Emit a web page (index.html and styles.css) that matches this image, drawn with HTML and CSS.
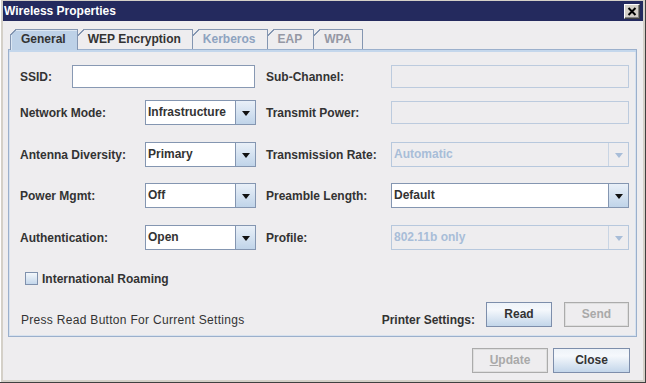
FILE: index.html
```html
<!DOCTYPE html>
<html>
<head>
<meta charset="utf-8">
<link rel="stylesheet" href="styles.css">
</head>
<body>
<div class="window">
  <div class="titlebar">
    <span class="title">Wireless Properties</span>
    <span class="close-btn"><svg width="10" height="9" viewBox="0 0 10 9"><path d="M1.5 1 L8.5 8 M8.5 1 L1.5 8" stroke="#000" stroke-width="2" fill="none"/></svg></span>
  </div>
  <div class="content">
    <div class="tabs">
      <div class="tab tab-first selected">General</div>
      <div class="tab">WEP Encryption</div>
      <div class="tab tab-disabled">Kerberos</div>
      <div class="tab tab-dim">EAP</div>
      <div class="tab tab-dim">WPA</div>
    </div>
    <div class="pane">
      <div class="form">
        <div class="row row-ssid">
          <div class="pair pair-left">
            <span class="lbl lbl-short">SSID:</span>
            <span class="textfield textfield-ssid"></span>
          </div>
          <div class="pair pair-right">
            <span class="lbl">Sub-Channel:</span>
            <span class="textfield disabled"></span>
          </div>
        </div>
        <div class="row">
          <div class="pair pair-left">
            <span class="lbl">Network Mode:</span>
            <span class="combo"><span class="value">Infrastructure</span><span class="arrow"><i class="tri"></i></span></span>
          </div>
          <div class="pair pair-right">
            <span class="lbl">Transmit Power:</span>
            <span class="textfield disabled"></span>
          </div>
        </div>
        <div class="row">
          <div class="pair pair-left">
            <span class="lbl">Antenna Diversity:</span>
            <span class="combo"><span class="value">Primary</span><span class="arrow"><i class="tri"></i></span></span>
          </div>
          <div class="pair pair-right">
            <span class="lbl">Transmission Rate:</span>
            <span class="combo disabled"><span class="value">Automatic</span><span class="arrow"><i class="tri"></i></span></span>
          </div>
        </div>
        <div class="row">
          <div class="pair pair-left">
            <span class="lbl">Power Mgmt:</span>
            <span class="combo"><span class="value">Off</span><span class="arrow"><i class="tri"></i></span></span>
          </div>
          <div class="pair pair-right">
            <span class="lbl">Preamble Length:</span>
            <span class="combo"><span class="value">Default</span><span class="arrow"><i class="tri"></i></span></span>
          </div>
        </div>
        <div class="row">
          <div class="pair pair-left">
            <span class="lbl">Authentication:</span>
            <span class="combo"><span class="value">Open</span><span class="arrow"><i class="tri"></i></span></span>
          </div>
          <div class="pair pair-right">
            <span class="lbl">Profile:</span>
            <span class="combo disabled"><span class="value">802.11b only</span><span class="arrow"><i class="tri"></i></span></span>
          </div>
        </div>
      </div>
      <div class="check-row">
        <span class="checkbox"></span>
        <span class="check-label">International Roaming</span>
      </div>
      <div class="bottom-row">
        <span class="hint">Press Read Button For Current Settings</span>
        <span class="spacer"></span>
        <span class="lbl-printer">Printer Settings:</span>
        <span class="btn btn-read">Read</span>
        <span class="btn btn-send disabled">Send</span>
      </div>
    </div>
    <div class="footer">
      <span class="btn btn-update disabled"><u>U</u>pdate</span>
      <span class="btn btn-close">Close</span>
    </div>
  </div>
</div>
</body>
</html>
```
FILE: styles.css
```css
html, body {
  margin: 0;
  padding: 0;
  background: #d4d0c8;
}
body {
  font-family: "Liberation Sans", Arial, sans-serif;
  font-size: 12px;
  color: #333333;
}
.window {
  width: 646px;
  height: 383px;
  box-sizing: border-box;
  padding: 1px 2px 2px 3px;
  background: #d4d0c8;
  border-right: 1px solid #404040;
  border-bottom: 1px solid #404040;
  box-shadow: inset 1px 0 0 #ffffff;
  display: flex;
  flex-direction: column;
}
.titlebar {
  height: 20px;
  flex: none;
  background: #242a5e;
  display: flex;
  align-items: flex-start;
  justify-content: space-between;
}
.title {
  color: #ffffff;
  font-weight: bold;
  font-size: 12px;
  line-height: 20px;
  padding-left: 1px;
}
.close-btn {
  margin-top: 3px;
  margin-right: 3px;
  width: 16px;
  height: 15px;
  box-sizing: border-box;
  background: #d4d0c8;
  border-top: 1px solid #ffffff;
  border-left: 1px solid #ffffff;
  border-right: 1px solid #404040;
  border-bottom: 1px solid #404040;
  box-shadow: inset -1px -1px 0 #808080;
  display: flex;
  align-items: center;
  justify-content: center;
}
.close-btn svg { display: block; margin-left: -1px; margin-top: -1px; }
.content {
  flex: 1;
  background: #eeedef;
  padding-top: 8px;
  display: flex;
  flex-direction: column;
}
.tabs {
  display: flex;
  margin-left: 7px;
  height: 20px;
  position: relative;
  z-index: 1;
}
.tab {
  position: relative;
  box-sizing: border-box;
  height: 20px;
  padding: 0 11px 0 10px;
  border-top: 1px solid #8496b1;
  border-right: 1px solid #8496b1;
  font-weight: bold;
  line-height: 19px;
  color: #333333;
  background: #eeedef;
}
.tab::before {
  content: "";
  position: absolute;
  top: -1px;
  left: 0;
  width: 7px;
  height: 7px;
  background: linear-gradient(to bottom right, #eeedef 0, #eeedef calc(50% - 0.8px), #8496b1 calc(50% - 0.8px), #8496b1 calc(50% + 0.6px), transparent calc(50% + 0.6px));
}
.tab-first {
  border-left: 1px solid #8496b1;
}
.tab-first::before {
  left: -1px;
}
.tab.selected {
  background: #bdd1e7;
  height: 21px;
  box-shadow: inset 1px 1px 0 #dce7f3;
}
.tab-disabled { color: #8ea3c0; }
.tab-dim { color: #9598a4; }
.pane {
  margin-left: 5px;
  width: 629px;
  height: 288px;
  box-sizing: border-box;
  border: 1px solid #9bb0cc;
  box-shadow: inset 0 2px 0 #c4d7ec, inset 1px 0 0 #d7e2ef, inset -1px 0 0 #d7e2ef, inset 0 -1px 0 #d7e2ef;
  padding: 15px 7px 0 11px;
  display: flex;
  flex-direction: column;
}
.form {
  display: flex;
  flex-direction: column;
}
.row {
  display: flex;
  gap: 10px;
  height: 25px;
}
.row-ssid { height: 23px; }
.row:nth-child(2) { margin-top: 12px; }
.row:nth-child(3) { margin-top: 17px; }
.row:nth-child(4) { margin-top: 16px; }
.row:nth-child(5) { margin-top: 17px; }
.pair {
  display: flex;
  align-items: center;
  height: 100%;
}
.pair-left { width: 236px; }
.pair-right { width: 363px; }
.lbl {
  width: 125px;
  flex: none;
  font-weight: bold;
  white-space: nowrap;
}
.lbl-short { width: 52px; }
.textfield {
  flex: 1;
  height: 23px;
  box-sizing: border-box;
  background: #ffffff;
  border: 1px solid #8899b3;
}
.textfield-ssid { margin-right: 1px; }
.textfield.disabled {
  background: transparent;
  border-color: #bccbde;
}
.combo {
  flex: 1;
  height: 25px;
  box-sizing: border-box;
  display: flex;
  background: #ffffff;
  border: 1px solid #8496b1;
}
.combo .value {
  flex: 1;
  padding-left: 2px;
  font-weight: bold;
  line-height: 23px;
  color: #333333;
  white-space: nowrap;
}
.combo .arrow {
  width: 19px;
  flex: none;
  border-left: 1px solid #8496b1;
  background: linear-gradient(#e9f0f8, #c0d4e9);
  display: flex;
  align-items: center;
  justify-content: center;
}
.tri {
  display: block;
  width: 0;
  height: 0;
  border-left: 4px solid transparent;
  border-right: 4px solid transparent;
  border-top: 5px solid #111111;
  margin-top: 1px;
}
.combo.disabled {
  background: transparent;
  border-color: #b7c8dd;
}
.combo.disabled .value { color: #a8bdd8; }
.combo.disabled .arrow {
  background: transparent;
  border-left-color: #c9d5e4;
}
.combo.disabled .tri { border-top-color: #a8bdd8; }
.check-row {
  display: flex;
  align-items: center;
  height: 13px;
  margin-top: 22px;
  padding-left: 5px;
}
.checkbox {
  width: 13px;
  height: 13px;
  box-sizing: border-box;
  border: 1px solid #7f91ad;
  background: linear-gradient(#f3f7fb, #c4d7eb);
}
.check-label {
  margin-left: 4px;
  font-weight: bold;
  line-height: 14px;
}
.bottom-row {
  display: flex;
  align-items: flex-end;
  height: 25px;
  margin-top: 17px;
}
.hint {
  margin-left: 1px;
  line-height: 14px;
  letter-spacing: 0.3px;
}
.spacer { flex: 1; }
.lbl-printer {
  font-weight: bold;
  line-height: 14px;
  margin-right: 11px;
}
.btn {
  height: 25px;
  box-sizing: border-box;
  border: 1px solid #7d8eab;
  background: linear-gradient(#eef3f9 0%, #f5f8fc 30%, #c3d6ea 100%);
  font-weight: bold;
  line-height: 23px;
  text-align: center;
  color: #333333;
}
.btn u { text-decoration: underline; }
.btn.disabled {
  background: transparent;
  border-color: #ababab;
  box-shadow: inset 0 0 0 1px #dedede;
  color: #a9a9a9;
}
.btn-read { width: 66px; }
.btn-send { width: 65px; margin-left: 12px; }
.footer {
  display: flex;
  justify-content: flex-end;
  gap: 5px;
  margin-top: 11px;
  padding-right: 13px;
}
.btn-update { width: 76px; }
.btn-close { width: 77px; }
```
